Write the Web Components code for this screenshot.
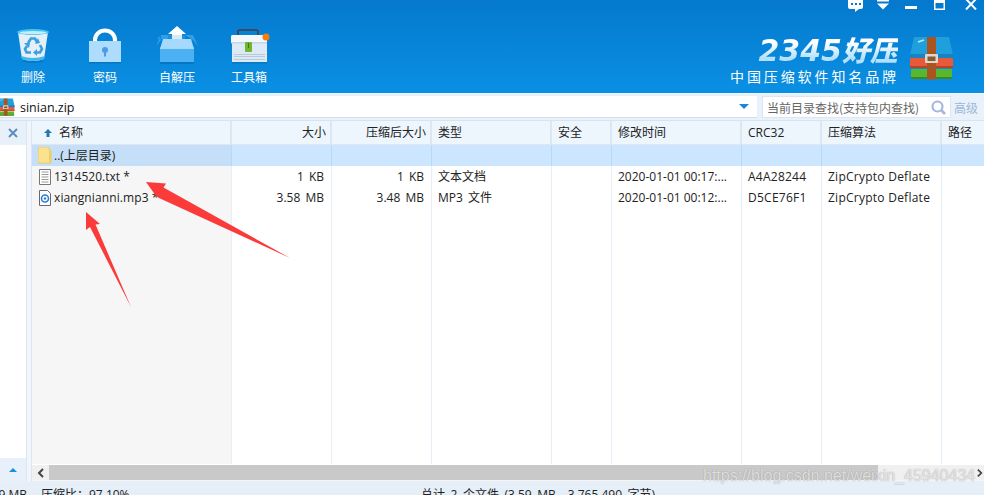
<!DOCTYPE html>
<html lang="zh-CN">
<head>
<meta charset="utf-8">
<title>2345好压</title>
<style>
  html, body { margin: 0; height: 495px; overflow: hidden; background: #fff; }
  body { font: 12px "Open Sans", "Noto Sans CJK SC", sans-serif; color: #222; }
</style>
</head>
<body>
<zip-window>
  <zip-toolbar slot="toolbar">
    <tool-button label="删除">
      <svg width="34" height="36" viewBox="0 0 34 36">
        <path d="M5 28 L7 34 Q17 36 27 34 L29 28Z" fill="#0669b4" opacity=".45"/>
        <path d="M2 4 L6 31 Q17 35 28 31 L32 4Z" fill="#e4eff7"/>
        <path d="M5 28 L6 31 Q17 35 28 31 L29 28 Q17 32 5 28Z" fill="#3db9ee"/>
        <ellipse cx="17" cy="4" rx="16" ry="3" fill="#45c3f2"/>
        <ellipse cx="17" cy="4.600" rx="13.500" ry="1.700" fill="#c7ecfb"/>
        <g fill="none" stroke="#3b9fe2" stroke-width="2.600">
          <path d="M12 15 L15 10.500 H19 L21 14"/>
          <path d="M24 17 L26 21 L24 24.500 H20"/>
          <path d="M15 24.500 H10.500 L9 21 L11 18"/>
        </g>
        <g fill="#3b9fe2"><path d="M19 16 L24 15 L22 10Z"/><path d="M21 21 L17 24.500 L21 28Z"/><path d="M8 15 L13 20 L14 15Z"/></g>
      </svg>
    </tool-button>
    <tool-button label="密码">
      <svg width="34" height="36" viewBox="0 0 34 36">
        <path d="M7 15 V12 A10 9.500 0 0 1 27 12 V15" fill="none" stroke="#fff" stroke-width="4"/>
        <rect x="1" y="13" width="32" height="21" fill="#aedcfd"/>
        <rect x="1" y="34" width="32" height="1.500" fill="#0667ad" opacity=".55"/>
        <circle cx="17" cy="22" r="3" fill="#4d9be0"/>
        <rect x="16" y="22" width="2" height="6.500" fill="#4d9be0"/>
      </svg>
    </tool-button>
    <tool-button label="自解压">
      <svg width="44" height="38" viewBox="0 0 44 38">
        <path d="M6 9 H14 L13 13 H2Z M30 9 H38 L43 20 L38 14Z M6 9 L1 20 L6 14Z" fill="#2f9fe8"/>
        <path d="M14 9 H30 V13 H14Z" fill="#1f8edc"/>
        <path d="M22 0 L31 8 H27 V14 H17 V8 H13Z" fill="#fff"/>
        <rect x="17" y="9" width="10" height="5" fill="#d6ebf9"/>
        <rect x="5" y="21" width="34" height="15" fill="#4cb0f5"/>
        <path d="M8 13 H36 L39 23 H5Z" fill="#a6d9fe"/>
        <rect x="5" y="36" width="34" height="2" fill="#0667ad" opacity=".55"/>
      </svg>
    </tool-button>
    <tool-button label="工具箱">
      <svg width="42" height="36" viewBox="0 0 42 36" style="margin-left:1px">
        <path d="M9 10 V4 Q9 2 11 2 H27 Q29 2 29 4 V10" fill="none" stroke="#3a4a62" stroke-width="2"/>
        <rect x="3" y="15" width="35" height="19" fill="#dde9f5"/>
        <path d="M3 7 H38 V15 H2 V8Z" fill="#f3f8fc"/>
        <rect x="2" y="14" width="36" height="1.500" fill="#c6d6e5"/>
        <rect x="16" y="14" width="7" height="10" rx="1" fill="#73b52e"/>
        <rect x="19" y="15" width="1" height="5" fill="#3d7a10"/>
        <g fill="#b8cadc"><rect x="5" y="26" width="31" height="1"/><rect x="5" y="28" width="31" height="1"/><rect x="5" y="31" width="31" height="1"/></g>
        <rect x="3" y="34" width="35" height="1.500" fill="#0667ad" opacity=".5"/>
        <circle cx="37" cy="9" r="3.500" fill="#fb7d08"/>
      </svg>
    </tool-button>
    <brand-block slot="brand"></brand-block>
  </zip-toolbar>

  <path-bar slot="path" path="sinian.zip"></path-bar>

  <zip-sidebar slot="side"></zip-sidebar>

  <file-list slot="list">
    <file-row icon="folder" name="..(上层目录)" selected></file-row>
    <file-row icon="text" name="1314520.txt *" size="1 KB" packed="1 KB" type="文本文档"
      time="2020-01-01 00:17:..." crc="A4A28244" method="ZipCrypto Deflate"></file-row>
    <file-row icon="audio" name="xiangnianni.mp3 *" size="3.58 MB" packed="3.48 MB" type="MP3 文件"
      time="2020-01-01 00:12:..." crc="D5CE76F1" method="ZipCrypto Deflate"></file-row>
  </file-list>

  <zip-status slot="status" left="3.59 MB" ratio="压缩比：97.10%" total="总计 2 个文件 (3.59 MB，3,765,490 字节)"></zip-status>

  <note-overlay slot="overlay"></note-overlay>
</zip-window>

<script>
  const archiveIcon = (w, h) => `
    <svg width="${w}" height="${h}" viewBox="0 0 46 44">
      <path d="M6 1 H41 L45 19 V22 H2 V19Z" fill="#1fa0dc"/>
      <path d="M2 18 H45 V22 H2Z" fill="#1684c0"/>
      <rect x="2" y="22" width="43" height="10" rx="1" fill="#e8583a"/>
      <rect x="2" y="30" width="43" height="2" fill="#b8422a"/>
      <rect x="3" y="33" width="41" height="10" rx="1" fill="#5ab52f"/>
      <rect x="3" y="41" width="41" height="2" fill="#3b8a1f"/>
      <path d="M10 6 L16 4" stroke="#bfe9fa" stroke-width="1.500"/>
      <path d="M19 1 H28 V43 L23.500 44 L19 43Z" fill="#a9551f"/>
      <rect x="17" y="18" width="13" height="9" rx="1" fill="#dcd8cc"/>
      <rect x="19.500" y="20.500" width="8" height="4.500" fill="#8a5a33"/>
    </svg>`;

  class ZipWindow extends HTMLElement {
    constructor() {
      super();
      this.attachShadow({ mode: 'open' });
      this.shadowRoot.innerHTML = `
        <style>
          :host { display: flex; flex-direction: column; position: relative; width: 984px; height: 495px; overflow: hidden; }
          .main { flex: 1; display: flex; min-height: 0; }
          .gutter { width: 5px; background: #f2f6fb; }
        </style>
        <slot name="toolbar"></slot>
        <slot name="path"></slot>
        <div class="main">
          <slot name="side"></slot>
          <div class="gutter"></div>
          <slot name="list"></slot>
        </div>
        <slot name="status"></slot>
        <slot name="overlay"></slot>
      `;
    }
  }

  class ZipToolbar extends HTMLElement {
    constructor() {
      super();
      this.attachShadow({ mode: 'open' });
      this.shadowRoot.innerHTML = `
        <style>
          :host {
            display: flex; justify-content: space-between; height: 93px; flex: none;
            background: linear-gradient(#0479cd, #0a90e3);
          }
          .tools { display: flex; margin-left: -3px; }
        </style>
        <div class="tools"><slot></slot></div>
        <slot name="brand"></slot>
      `;
    }
  }

  class ToolButton extends HTMLElement {
    constructor() {
      super();
      this.attachShadow({ mode: 'open' });
      this.shadowRoot.innerHTML = `
        <style>
          :host { display: flex; flex-direction: column; align-items: center; width: 72px; padding-top: 26px; box-sizing: border-box; }
          .icon { height: 38px; display: flex; align-items: flex-end; }
          .label { margin-top: 4px; font: 12px/18px "Noto Sans CJK SC", sans-serif; color: #fff; }
        </style>
        <div class="icon"><slot></slot></div>
        <div class="label">${this.getAttribute('label') || ''}</div>
      `;
    }
  }

  class BrandBlock extends HTMLElement {
    constructor() {
      super();
      this.attachShadow({ mode: 'open' });
      this.shadowRoot.innerHTML = `
        <style>
          :host { display: flex; flex-direction: column; align-items: flex-end; }
          .controls { display: flex; height: 12px; padding-right: 7px; align-items: flex-start; }
          .controls svg { display: block; }
          .brand { display: flex; margin-top: 24px; padding-right: 30px; align-items: flex-start; }
          .text { display: flex; flex-direction: column; align-items: flex-end; margin-right: 10px; }
          .name {
            font: italic bold 30px/26px "DejaVu Sans", "Noto Sans CJK SC", sans-serif;
            background: linear-gradient(#ffffff 25%, #b3e0fa 80%);
            -webkit-background-clip: text; background-clip: text; color: transparent;
            white-space: nowrap;
          }
          .name i { font: italic 900 28px/26px "Noto Sans CJK SC", sans-serif; }
          .slogan { margin-top: 3px; font: 14px/18px "Noto Sans CJK SC", sans-serif; letter-spacing: 2.900px; color: #fff; white-space: nowrap; margin-right: -1px; }
          .logo { display: block; line-height: 0; }
        </style>
        <div class="controls">
          <svg width="15" height="12" viewBox="0 0 15 12">
            <path d="M0 0 H15 V7 Q15 9 13 9 H11 L7 12 V9 H2 Q0 9 0 7Z" fill="#fff"/>
            <g fill="#0479cd"><rect x="3" y="3" width="2" height="2"/><rect x="7" y="3" width="2" height="2"/><rect x="11" y="3" width="2" height="2"/></g>
          </svg>
          <svg width="12" height="10" viewBox="0 0 12 10" style="margin-left:14px">
            <rect width="12" height="1.500" fill="#fff"/><path d="M0 3.500 H12 L6 9.500Z" fill="#fff"/>
          </svg>
          <svg width="12" height="10" viewBox="0 0 12 10" style="margin-left:16px"><rect y="6" width="12" height="3" fill="#fff"/></svg>
          <svg width="11" height="10" viewBox="0 0 11 10" style="margin-left:17px"><path d="M0 0 H11 V10 H0Z M1.500 3 V8.500 H9.500 V3Z" fill="#fff" fill-rule="evenodd"/></svg>
          <svg width="12" height="10" viewBox="0 0 12 10" style="margin-left:20px"><path d="M1 -1 L11 9.500 M11 -1 L1 9.500" stroke="#fff" stroke-width="2"/></svg>
        </div>
        <div class="brand">
          <div class="text">
            <div class="name">2345<i>好压</i></div>
            <div class="slogan">中国压缩软件知名品牌</div>
          </div>
          <div class="logo">${archiveIcon(46, 44)}</div>
        </div>
      `;
    }
  }

  class PathBar extends HTMLElement {
    constructor() {
      super();
      this.attachShadow({ mode: 'open' });
      this.shadowRoot.innerHTML = `
        <style>
          :host {
            display: flex; align-items: stretch; flex: none; height: 28px; box-sizing: border-box;
            padding: 2px 6px 2px 0; background: #e9f2fb; border-bottom: 1px solid #d9e3ef;
            border-top: 1px solid #f2f7fc;
          }
          .path {
            width: 757px; display: flex; align-items: center; background: #fff; overflow: hidden; flex: none;
            border-bottom: 1px solid #d5deeb;
          }
          .archive { margin-left: -4px; margin-right: 5px; line-height: 0; }
          .name { font: 12.500px "Open Sans", sans-serif; color: #111; flex: 1; padding-top: 2px; }
          .caret { width: 0; height: 0; border: 5px solid transparent; border-top: 5px solid #1a86d8; border-bottom: 0; margin-right: 8px; }
          .search {
            width: 189px; margin-left: 5px; box-sizing: border-box; display: flex; align-items: center; flex: none;
            background: #fff; border: 1px solid #dde6f0; padding: 0 4px 0 4px;
            font: 12px "Noto Sans CJK SC", sans-serif; color: #666; white-space: nowrap;
          }
          .search span { flex: 1; }
          .adv { margin-left: 3px; width: 24px; font: 12px/24px "Noto Sans CJK SC", sans-serif; color: #9bb6d8; white-space: nowrap; }
        </style>
        <div class="path">
          <span class="archive">${archiveIcon(19, 18)}</span>
          <span class="name">${this.getAttribute('path') || ''}</span>
          <span class="caret"></span>
        </div>
        <div class="search">
          <span>当前目录查找(支持包内查找)</span>
          <svg width="15" height="15" viewBox="0 0 15 15"><circle cx="6.500" cy="6.500" r="5" fill="none" stroke="#a3b8dc" stroke-width="2.200"/><path d="M10 10 L14 14" stroke="#a3b8dc" stroke-width="2.600"/></svg>
        </div>
        <div class="adv">高级</div>
      `;
    }
  }

  class ZipSidebar extends HTMLElement {
    constructor() {
      super();
      this.attachShadow({ mode: 'open' });
      this.shadowRoot.innerHTML = `
        <style>
          :host {
            display: flex; flex-direction: column; justify-content: space-between; width: 27px; flex: none;
            box-sizing: border-box; border-right: 1px solid #dbe6f2; background: #fff;
          }
          .close { height: 24px; background: #e8f1fa; display: flex; align-items: center; justify-content: center; }
          .up { height: 23px; background: #e8f1fa; display: flex; align-items: center; justify-content: center; }
          .tri { width: 0; height: 0; border: 4px solid transparent; border-bottom: 4px solid #1a8fe0; border-top: 0; }
        </style>
        <div class="close">
          <svg width="10" height="10" viewBox="0 0 10 10"><path d="M1 1 L9 9 M9 1 L1 9" stroke="#5d8dbd" stroke-width="2"/></svg>
        </div>
        <div class="up"><span class="tri"></span></div>
      `;
    }
  }

  const COLS = '200px 100px 100px 120px 60px 130px 80px 120px 1fr';

  class FileList extends HTMLElement {
    constructor() {
      super();
      this.attachShadow({ mode: 'open' });
      const head = [['名称'], ['大小', 'r'], ['压缩后大小', 'r'], ['类型'], ['安全'], ['修改时间'], ['CRC32'], ['压缩算法'], ['路径']];
      this.shadowRoot.innerHTML = `
        <style>
          :host { display: flex; flex-direction: column; flex: 1; min-width: 0; --cols: ${COLS}; border-left: 1px solid #dbe6f2; margin-left: -1px; }
          .head { display: grid; grid-template-columns: var(--cols); height: 24px; flex: none; background: #edf5fd; }
          .head div {
            padding: 0 6px; line-height: 23px; border-right: 2px solid #dde6f1; border-bottom: 1px solid #dde6f1; box-sizing: border-box;
            white-space: nowrap; color: #222;
            font-family: "Open Sans", "Noto Sans CJK SC", sans-serif;
          }
          .head div.r { text-align: right; padding-right: 4px; }
          .head div:first-child { padding-left: 12px; display: flex; align-items: center; }
          .head div:last-child { border-right: 0; }
          .sort { margin-right: 7px; }
          .body {
            flex: 1; min-height: 0; background-color: #fff; background-repeat: no-repeat;
            background-image:
              linear-gradient(#e6eff8, #e6eff8), linear-gradient(#e6eff8, #e6eff8), linear-gradient(#e6eff8, #e6eff8),
              linear-gradient(#e6eff8, #e6eff8), linear-gradient(#e6eff8, #e6eff8), linear-gradient(#e6eff8, #e6eff8),
              linear-gradient(#e6eff8, #e6eff8), linear-gradient(#e6eff8, #e6eff8), linear-gradient(#f6f6f6, #f6f6f6);
            background-size: 1px 100%, 1px 100%, 1px 100%, 1px 100%, 1px 100%, 1px 100%, 1px 100%, 1px 100%, 199px 100%;
            background-position: 199px 0, 299px 0, 399px 0, 519px 0, 579px 0, 709px 0, 789px 0, 909px 0, 0 0;
          }
          .bar { display: flex; height: 17px; box-sizing: border-box; flex: none; align-items: stretch; border-top: 1px solid #fff; border-bottom: 1px solid #f4f4f4; }
          .btn { width: 17px; background: #f0f0f0; display: flex; align-items: center; justify-content: center; flex: none; }
          .thumb { width: 829px; background: #c9c9c9; flex: none; }
          .track { flex: 1; background: #f0f0f0; display: flex; align-items: center; justify-content: flex-end; padding-right: 1px; }
        </style>
        <div class="head">${head.map((h, i) => `<div class="${h[1] || ''}">${i === 0 ? `<svg class="sort" width="8" height="8" viewBox="0 0 8 8"><path d="M4 0 L8 4 H5.500 V8 H2.500 V4 H0Z" fill="#2a78b0"/></svg>` : ''}${h[0]}</div>`).join('')}</div>
        <div class="body"><slot></slot></div>
        <div class="bar">
          <div class="btn"><svg width="7" height="10" viewBox="0 0 7 10"><path d="M6 1 L2 5 L6 9" fill="none" stroke="#444" stroke-width="2"/></svg></div>
          <div class="thumb"></div>
          <div class="track"><svg width="6" height="10" viewBox="0 0 7 10"><path d="M1 1 L5 5 L1 9" fill="none" stroke="#444" stroke-width="2"/></svg></div>
        </div>
      `;
    }
  }

  const rowIcons = {
    folder: `<svg width="14" height="17" viewBox="0 0 14 17"><path d="M0 0 H11 V3 L13 4 V16 H0Z" fill="#fbe28f" stroke="#e6c65e" stroke-width=".800"/><path d="M11 3 H13 V16 H11Z" fill="#f3cd5f"/></svg>`,
    text: `<svg width="12" height="16" viewBox="0 0 12 16"><path d="M.5 .5 H11.500 V15.500 H.5Z" fill="#fff" stroke="#777"/><path d="M2.500 3 H9.500 M2.500 5.500 H9.500 M2.500 8 H9.500 M2.500 10.500 H9.500 M2.500 13 H9.500" stroke="#999"/></svg>`,
    audio: `<svg width="12" height="16" viewBox="0 0 12 16"><path d="M.5 .5 H8.500 L11.500 3.500 V15.500 H.5Z" fill="#fff" stroke="#667"/><circle cx="6" cy="8.500" r="3.500" fill="none" stroke="#2a7fd0" stroke-width="1.600"/><circle cx="6" cy="8.500" r="1.200" fill="#2a7fd0"/></svg>`
  };

  class FileRow extends HTMLElement {
    constructor() {
      super();
      this.attachShadow({ mode: 'open' });
      const a = n => this.getAttribute(n) || '';
      const sel = this.hasAttribute('selected');
      this.shadowRoot.innerHTML = `
        <style>
          :host { display: grid; grid-template-columns: var(--cols); height: 21px; background: ${sel ? '#cce6ff' : 'transparent'}; }
          :host > * { box-sizing: border-box; }
          div { padding: 0 6px; line-height: 21px; white-space: nowrap; overflow: hidden; color: #222; }
          .r { text-align: right; padding-right: 8px; word-spacing: 2px; }
          .name { display: flex; align-items: center; padding-left: ${a('icon') === 'folder' ? 6 : 7}px; overflow: visible; background: ${sel ? '#c4dff7' : 'transparent'}; letter-spacing: ${a('icon') === 'audio' ? '.1px' : '0'}; }
          .name svg { flex: none; margin-right: ${a('icon') === 'folder' ? 2 : 3}px; }
          .sep { border-right: ${sel ? '1px solid #b8d8f5' : '0'}; }
          .type { word-spacing: 2px; }
          .wide { letter-spacing: .25px; }
        </style>
        <div class="name sep">${rowIcons[a('icon')] || ''}<span>${a('name')}</span></div>
        <div class="r sep">${a('size')}</div>
        <div class="r sep">${a('packed')}</div>
        <div class="type sep">${a('type')}</div>
        <div class="sep"></div>
        <div class="sep">${a('time')}</div>
        <div class="wide sep">${a('crc')}</div>
        <div class="wide sep">${a('method')}</div>
        <div></div>
      `;
    }
  }

  class ZipStatus extends HTMLElement {
    constructor() {
      super();
      this.attachShadow({ mode: 'open' });
      const a = n => this.getAttribute(n) || '';
      this.shadowRoot.innerHTML = `
        <style>
          :host {
            display: flex; height: 14px; flex: none; overflow: hidden; background: #e6eff8;
            font: 12px/18px "Open Sans", "Noto Sans CJK SC", sans-serif; color: #222; box-sizing: border-box;
          }
          div { white-space: nowrap; padding-top: 5px; height: 18px; }
          .left { width: 27px; display: flex; justify-content: flex-end; overflow: hidden; flex: none; }
          .ratio { margin-left: 14px; width: 380px; flex: none; }
          .total { word-spacing: 2.400px; }
        </style>
        <div class="left"><span>${a('left')}</span></div>
        <div class="ratio">${a('ratio')}</div>
        <div class="total">${a('total')}</div>
      `;
    }
  }

  class NoteOverlay extends HTMLElement {
    constructor() {
      super();
      this.attachShadow({ mode: 'open' });
      this.shadowRoot.innerHTML = `
        <style>
          :host { position: absolute; inset: 0; pointer-events: none; display: block; }
          svg { position: absolute; left: 0; top: 0; }
          .mark {
            position: absolute; left: 703px; top: 464px; font: 16px/24px "Liberation Sans", sans-serif;
            color: rgba(255, 255, 255, .72); text-shadow: 0 0 1px rgba(100, 100, 100, .7); white-space: nowrap;
          }
        </style>
        <svg width="984" height="495" viewBox="0 0 984 495">
          <path d="M146 182 L166 183.500 L163.500 187.500 L290 258 L159 198 L156 196Z" fill="#fb3a3a"/>
          <path d="M86 212 L100 224 L95.500 224.500 L131 307 L90 227 L86 230Z" fill="#fb3a3a"/>
        </svg>
        <div class="mark">https://blog.csdn.net/weixin_45940434</div>
      `;
    }
  }

  customElements.define('zip-window', ZipWindow);
  customElements.define('zip-toolbar', ZipToolbar);
  customElements.define('tool-button', ToolButton);
  customElements.define('brand-block', BrandBlock);
  customElements.define('path-bar', PathBar);
  customElements.define('zip-sidebar', ZipSidebar);
  customElements.define('file-list', FileList);
  customElements.define('file-row', FileRow);
  customElements.define('zip-status', ZipStatus);
  customElements.define('note-overlay', NoteOverlay);
</script>
</body>
</html>
